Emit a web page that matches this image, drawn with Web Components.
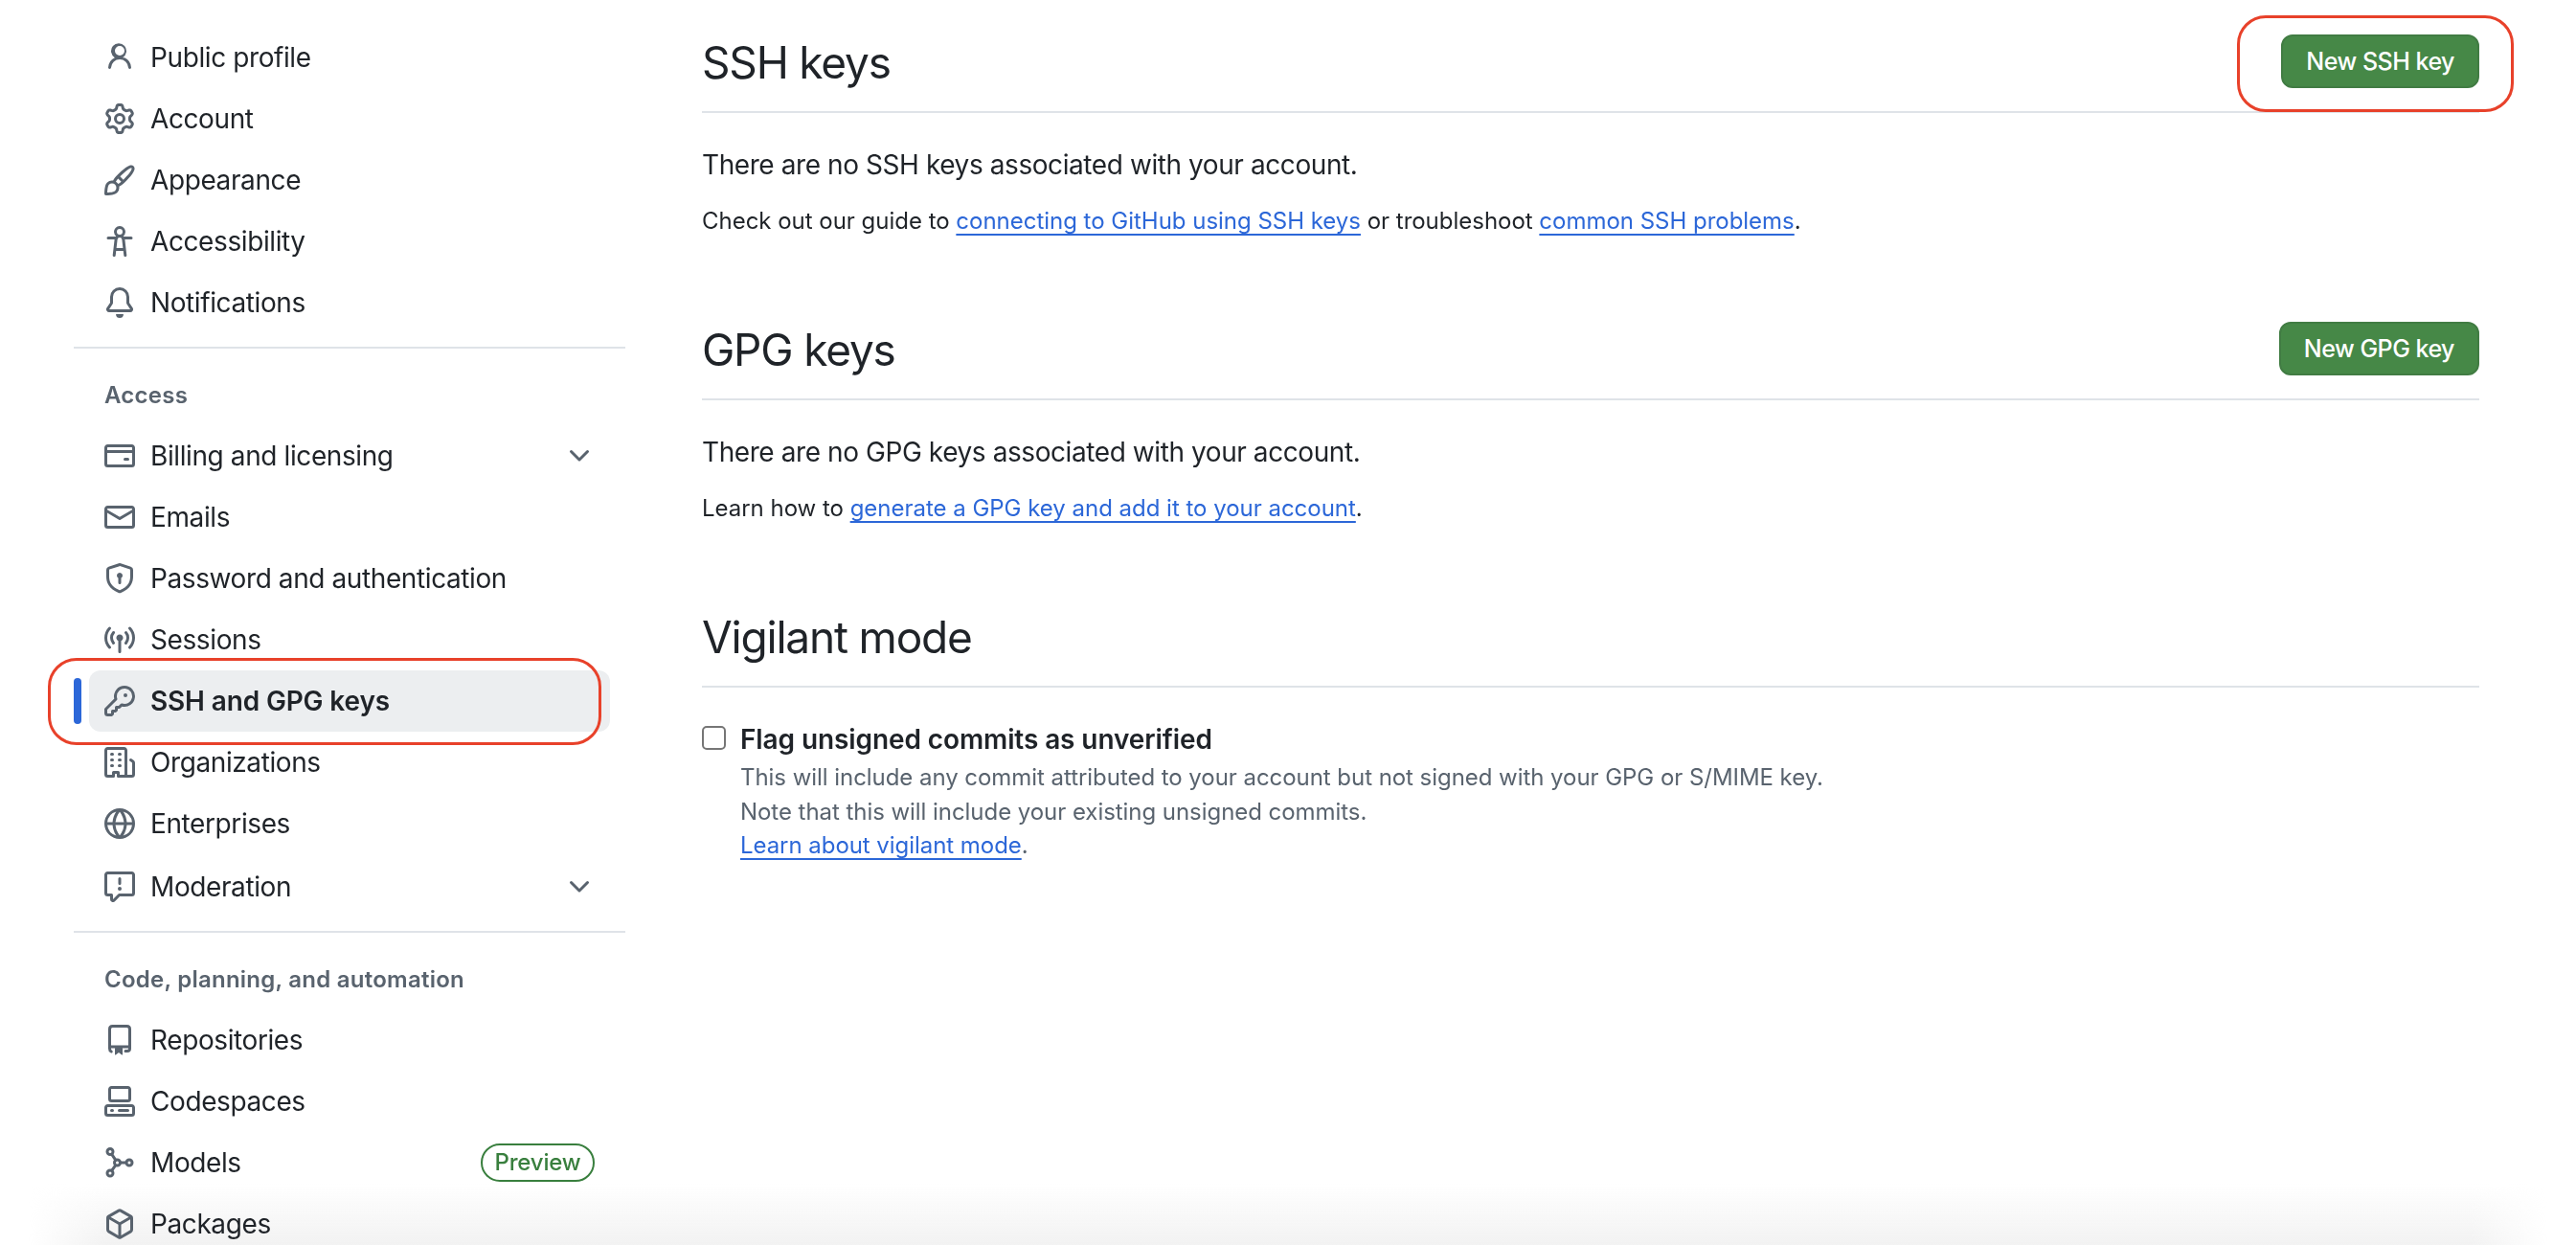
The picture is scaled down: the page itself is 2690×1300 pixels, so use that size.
<!DOCTYPE html>
<html lang="en">
<head>
<meta charset="utf-8">
<title>SSH and GPG keys</title>
<style>
  html { background: #fff; }
  html, body { margin: 0; height: 100%; overflow: hidden; }
  body { font-family: Inter, "Liberation Sans", sans-serif; color: #1f2328; }
</style>
</head>
<body>
<settings-page>
  <settings-sidebar slot="side">
    <nav-item icon="person">Public profile</nav-item>
    <nav-item icon="gear">Account</nav-item>
    <nav-item icon="paintbrush">Appearance</nav-item>
    <nav-item icon="accessibility">Accessibility</nav-item>
    <nav-item icon="bell">Notifications</nav-item>
    <nav-group label="Access">
      <nav-item icon="card" chevron>Billing and licensing</nav-item>
      <nav-item icon="mail">Emails</nav-item>
      <nav-item icon="shield">Password and authentication</nav-item>
      <nav-item icon="broadcast">Sessions</nav-item>
      <nav-item icon="key" active>SSH and GPG keys</nav-item>
      <nav-item icon="org">Organizations</nav-item>
      <nav-item icon="globe">Enterprises</nav-item>
      <nav-item icon="report" chevron style="margin-top:2px">Moderation</nav-item>
    </nav-group>
    <nav-group label="Code, planning, and automation">
      <nav-item icon="repo">Repositories</nav-item>
      <nav-item icon="codespaces">Codespaces</nav-item>
      <nav-item icon="models">Models<preview-pill slot="trailing">Preview</preview-pill></nav-item>
      <nav-item icon="package">Packages</nav-item>
    </nav-group>
  </settings-sidebar>

  <key-section heading="SSH keys">
    <green-button slot="action" ringed>New SSH key</green-button>
    <p class="lead">There are no SSH keys associated with your account.</p>
    <p>Check out our guide to <a href="#">connecting to GitHub using SSH keys</a> or troubleshoot <a href="#">common SSH problems</a>.</p>
  </key-section>
  <key-section heading="GPG keys">
    <green-button slot="action">New GPG key</green-button>
    <p class="lead">There are no GPG keys associated with your account.</p>
    <p>Learn how to <a href="#">generate a GPG key and add it to your account</a>.</p>
  </key-section>
  <key-section heading="Vigilant mode">
    <check-field label="Flag unsigned commits as unverified">
      This will include any commit attributed to your account but not signed with your GPG or S/MIME key.<br>
      Note that this will include your existing unsigned commits.<br>
      <a href="#">Learn about vigilant mode</a>.
    </check-field>
  </key-section>
</settings-page>
<bottom-shade></bottom-shade>

<script>
const ICONS = {
  person: '<path d="M10.561 8.073a6.005 6.005 0 0 1 3.432 5.142.75.75 0 1 1-1.498.07 4.5 4.5 0 0 0-8.99 0 .75.75 0 0 1-1.498-.07 6.004 6.004 0 0 1 3.431-5.142 3.999 3.999 0 1 1 4.123 0ZM10.5 4.5a2.5 2.5 0 1 0-5 0 2.5 2.5 0 0 0 5 0Z"/>',
  gear: '<path d="M8 0a8.2 8.2 0 0 1 .701.031C9.444.095 9.99.645 10.16 1.29l.288 1.107c.018.066.079.158.212.224.231.114.454.243.668.386.123.082.233.09.299.071l1.103-.303c.644-.176 1.392.021 1.82.63.27.385.506.792.704 1.218.315.675.111 1.422-.364 1.891l-.814.806c-.049.048-.098.147-.088.294.016.257.016.515 0 .772-.01.147.038.246.088.294l.814.806c.475.469.679 1.216.364 1.891a7.977 7.977 0 0 1-.704 1.217c-.428.61-1.176.807-1.82.63l-1.102-.302c-.067-.019-.177-.011-.3.071a5.909 5.909 0 0 1-.668.386c-.133.066-.194.158-.211.224l-.29 1.106c-.168.646-.715 1.196-1.458 1.26a8.006 8.006 0 0 1-1.402 0c-.743-.064-1.289-.614-1.458-1.26l-.289-1.106c-.018-.066-.079-.158-.212-.224a5.738 5.738 0 0 1-.668-.386c-.123-.082-.233-.09-.299-.071l-1.103.303c-.644.176-1.392-.021-1.82-.63a8.12 8.12 0 0 1-.704-1.218c-.315-.675-.111-1.422.363-1.891l.815-.806c.05-.048.098-.147.088-.294a6.214 6.214 0 0 1 0-.772c.01-.147-.038-.246-.088-.294l-.815-.806C.635 6.045.431 5.298.746 4.623a7.92 7.92 0 0 1 .704-1.217c.428-.61 1.176-.807 1.82-.63l1.102.302c.067.019.177.011.3-.071.214-.143.437-.272.668-.386.133-.066.194-.158.211-.224l.29-1.106C6.009.645 6.556.095 7.299.03 7.53.01 7.764 0 8 0Zm-.571 1.525c-.036.003-.108.036-.137.146l-.289 1.105c-.147.561-.549.967-.998 1.189-.173.086-.34.183-.5.29-.417.278-.97.423-1.529.27l-1.103-.303c-.109-.03-.175.016-.195.045-.22.312-.412.644-.573.99-.014.031-.021.11.059.19l.815.806c.411.406.562.957.53 1.456a4.709 4.709 0 0 0 0 .582c.032.499-.119 1.05-.53 1.456l-.815.806c-.081.08-.073.159-.059.19.162.346.353.677.573.989.02.03.085.076.195.046l1.102-.303c.56-.153 1.113-.008 1.53.27.161.107.328.204.501.29.447.222.85.629.997 1.189l.289 1.105c.029.109.101.143.137.146a6.6 6.6 0 0 0 1.142 0c.036-.003.108-.036.137-.146l.289-1.105c.147-.561.549-.967.998-1.189.173-.086.34-.183.5-.29.417-.278.97-.423 1.529-.27l1.103.303c.109.029.175-.016.195-.045.22-.313.411-.644.573-.99.014-.031.021-.11-.059-.19l-.815-.806c-.411-.406-.562-.957-.53-1.456a4.709 4.709 0 0 0 0-.582c-.032-.499.119-1.05.53-1.456l.815-.806c.081-.08.073-.159.059-.19a6.464 6.464 0 0 0-.573-.989c-.02-.03-.085-.076-.195-.046l-1.102.303c-.56.153-1.113.008-1.53-.27a4.44 4.44 0 0 0-.501-.29c-.447-.222-.85-.629-.997-1.189l-.289-1.105c-.029-.11-.101-.143-.137-.146a6.6 6.6 0 0 0-1.142 0ZM11 8a3 3 0 1 1-6 0 3 3 0 0 1 6 0ZM9.5 8a1.5 1.5 0 1 0-3.001.001A1.5 1.5 0 0 0 9.5 8Z"/>',
  paintbrush: '<path d="M11.134 1.535c.7-.509 1.416-.942 2.076-1.155.649-.21 1.463-.267 2.069.34.603.601.568 1.411.368 2.07-.202.668-.624 1.39-1.125 2.096-1.011 1.424-2.496 2.987-3.775 4.249-1.098 1.084-2.132 1.839-3.04 2.3a3.744 3.744 0 0 1-1.055 3.217c-.431.431-1.065.691-1.657.861-.614.177-1.294.287-1.914.357A21.151 21.151 0 0 1 .797 16H.743l.007-.75H.749L.742 16a.75.75 0 0 1-.743-.742l.743-.008-.742.007v-.054a21.25 21.25 0 0 1 .13-2.284c.067-.647.187-1.287.358-1.914.17-.591.43-1.226.86-1.657a3.746 3.746 0 0 1 3.227-1.054c.466-.893 1.225-1.907 2.314-2.982 1.271-1.255 2.833-2.75 4.245-3.777ZM1.62 13.089c-.051.464-.086.929-.104 1.395.466-.018.932-.053 1.396-.104a10.511 10.511 0 0 0 1.668-.309c.526-.151.856-.325 1.011-.48a2.25 2.25 0 1 0-3.182-3.182c-.155.155-.329.485-.48 1.01a10.515 10.515 0 0 0-.309 1.67Zm10.396-10.34c-1.224.89-2.605 2.189-3.822 3.384l1.718 1.718c1.21-1.205 2.51-2.597 3.387-3.833.47-.662.78-1.227.912-1.662.134-.444.032-.551.009-.575h-.001V1.78c-.014-.014-.113-.113-.548.027-.432.14-.995.462-1.655.942Zm-4.832 7.266-.001.001a9.859 9.859 0 0 0 1.63-1.142L7.155 7.216a9.7 9.7 0 0 0-1.161 1.607c.482.302.889.71 1.19 1.192Z"/>',
  accessibility: '<path d="M9.923 5.302c.063.063.122.129.178.198H14A.75.75 0 0 1 14 7h-3.3l.578 5.163.362 2.997a.75.75 0 0 1-1.49.18L9.868 13H6.132l-.282 2.34a.75.75 0 0 1-1.49-.18l.362-2.997L5.3 7H2a.75.75 0 0 1 0-1.5h3.9a2.54 2.54 0 0 1 .176-.198 3 3 0 1 1 3.847 0ZM9.2 7.073h-.001a1.206 1.206 0 0 0-2.398 0L6.305 11.5h3.39ZM9.5 3a1.5 1.5 0 1 0-3.001.001A1.5 1.5 0 0 0 9.5 3Z"/>',
  bell: '<path d="M8 16a2 2 0 0 0 1.985-1.75c.017-.137-.097-.25-.235-.25h-3.5c-.138 0-.252.113-.235.25A2 2 0 0 0 8 16ZM3 5a5 5 0 0 1 10 0v2.947c0 .05.015.098.042.139l1.703 2.555A1.519 1.519 0 0 1 13.482 13H2.518a1.516 1.516 0 0 1-1.263-2.36l1.703-2.554A.255.255 0 0 0 3 7.947Zm5-3.5A3.5 3.5 0 0 0 4.5 5v2.947c0 .346-.102.683-.294.97l-1.703 2.556a.017.017 0 0 0-.003.01l.001.006c0 .002.002.004.004.006l.006.004.007.001h10.964l.007-.001.006-.004.004-.006.001-.007a.017.017 0 0 0-.003-.01l-1.703-2.554a1.745 1.745 0 0 1-.294-.97V5A3.5 3.5 0 0 0 8 1.5Z"/>',
  card: '<path d="M10.75 9a.75.75 0 0 0 0 1.5h1.5a.75.75 0 0 0 0-1.5h-1.5Z"/><path d="M0 3.75C0 2.784.784 2 1.75 2h12.5c.966 0 1.75.784 1.75 1.75v8.5A1.75 1.75 0 0 1 14.25 14H1.75A1.75 1.75 0 0 1 0 12.25ZM14.5 6.5h-13v5.75c0 .138.112.25.25.25h12.5a.25.25 0 0 0 .25-.25Zm0-2.75a.25.25 0 0 0-.25-.25H1.75a.25.25 0 0 0-.25.25V5h13Z"/>',
  mail: '<path d="M1.75 2h12.5c.966 0 1.75.784 1.75 1.75v8.5A1.75 1.75 0 0 1 14.25 14H1.75A1.75 1.75 0 0 1 0 12.25v-8.5C0 2.784.784 2 1.75 2ZM1.5 12.251c0 .138.112.25.25.25h12.5a.25.25 0 0 0 .25-.25V5.809L8.38 9.397a.75.75 0 0 1-.76 0L1.5 5.809v6.442Zm13-8.181v-.32a.25.25 0 0 0-.25-.25H1.75a.25.25 0 0 0-.25.25v.32L8 7.88Z"/>',
  shield: '<path d="m8.533.133 5.25 1.68A1.75 1.75 0 0 1 15 3.48V7c0 1.566-.32 3.182-1.303 4.682-.983 1.498-2.585 2.813-5.032 3.855a1.697 1.697 0 0 1-1.33 0c-2.447-1.042-4.049-2.357-5.032-3.855C1.32 10.182 1 8.566 1 7V3.48a1.75 1.75 0 0 1 1.217-1.667l5.25-1.68a1.748 1.748 0 0 1 1.066 0Zm-.61 1.429.001.001-5.25 1.68a.251.251 0 0 0-.174.237V7c0 1.36.275 2.666 1.057 3.859.784 1.194 2.121 2.342 4.366 3.298a.196.196 0 0 0 .154 0c2.245-.957 3.582-2.103 4.366-3.297C13.225 9.666 13.5 8.358 13.5 7V3.48a.25.25 0 0 0-.174-.238l-5.25-1.68a.25.25 0 0 0-.153 0ZM9.5 6.5c0 .536-.286 1.032-.75 1.3v2.45a.75.75 0 0 1-1.5 0V7.8A1.5 1.5 0 1 1 9.5 6.5Z"/>',
  broadcast: '<path d="M8.75 8.582v5.668a.75.75 0 0 1-1.5 0V8.582a1.75 1.75 0 1 1 1.5 0Zm3.983-7.125a.75.75 0 0 1 1.06.026A7.976 7.976 0 0 1 16 7c0 2.139-.84 4.083-2.207 5.517a.75.75 0 1 1-1.086-1.034A6.474 6.474 0 0 0 14.5 7a6.474 6.474 0 0 0-1.793-4.483.75.75 0 0 1 .026-1.06Zm-9.466 0c.3.286.312.76.026 1.06A6.474 6.474 0 0 0 1.5 7a6.47 6.47 0 0 0 1.793 4.483.75.75 0 0 1-1.086 1.034A7.973 7.973 0 0 1 0 7c0-2.139.84-4.083 2.207-5.517a.75.75 0 0 1 1.06-.026Zm8.556 2.321A4.983 4.983 0 0 1 13 7a4.983 4.983 0 0 1-1.177 3.222.75.75 0 1 1-1.146-.967A3.483 3.483 0 0 0 11.5 7c0-.86-.31-1.646-.823-2.255a.75.75 0 0 1 1.146-.967Zm-6.492.958A3.483 3.483 0 0 0 4.5 7a3.483 3.483 0 0 0 .823 2.255.75.75 0 0 1-1.146.967A4.981 4.981 0 0 1 3 7a4.983 4.983 0 0 1 1.188-3.236.75.75 0 1 1 1.143.972Z"/>',
  key: '<path d="M10.5 0a5.499 5.499 0 1 1-1.288 10.848l-.932.932a.749.749 0 0 1-.53.22H7v.75a.749.749 0 0 1-.22.53l-.5.5a.749.749 0 0 1-.53.22H5v.75a.749.749 0 0 1-.22.53l-.5.5a.749.749 0 0 1-.53.22h-2A1.75 1.75 0 0 1 0 14.25v-2c0-.199.079-.389.22-.53l4.932-4.932A5.5 5.5 0 0 1 10.5 0Zm-4 5.5c-.001.431.069.86.205 1.269a.75.75 0 0 1-.181.768L1.5 12.56v1.69c0 .138.112.25.25.25h1.69l.06-.06v-1.19a.75.75 0 0 1 .75-.75h1.19l.06-.06v-1.19a.75.75 0 0 1 .75-.75h1.19l1.023-1.025a.75.75 0 0 1 .768-.18A4 4 0 1 0 6.5 5.5ZM11 6a1 1 0 1 1 0-2 1 1 0 0 1 0 2Z"/>',
  org: '<path d="M1.75 16A1.75 1.75 0 0 1 0 14.25V1.75C0 .784.784 0 1.75 0h8.5C11.216 0 12 .784 12 1.75v12.5c0 .085-.006.168-.018.25h2.268a.25.25 0 0 0 .25-.25V8.285a.25.25 0 0 0-.111-.208l-1.055-.703a.749.749 0 1 1 .832-1.248l1.055.703c.487.325.779.871.779 1.456v5.965A1.75 1.75 0 0 1 14.25 16h-3.5a.766.766 0 0 1-.197-.026c-.099.017-.2.026-.303.026h-3a.75.75 0 0 1-.75-.75V14h-1v1.25a.75.75 0 0 1-.75.75Zm-.25-1.75c0 .138.112.25.25.25H4v-1.25a.75.75 0 0 1 .75-.75h2.5a.75.75 0 0 1 .75.75v1.25h2.25a.25.25 0 0 0 .25-.25V1.75a.25.25 0 0 0-.25-.25h-8.5a.25.25 0 0 0-.25.25ZM3.75 6h.5a.75.75 0 0 1 0 1.5h-.5a.75.75 0 0 1 0-1.5ZM3 3.75A.75.75 0 0 1 3.75 3h.5a.75.75 0 0 1 0 1.5h-.5A.75.75 0 0 1 3 3.75Zm4 3A.75.75 0 0 1 7.75 6h.5a.75.75 0 0 1 0 1.5h-.5A.75.75 0 0 1 7 6.75ZM7.75 3h.5a.75.75 0 0 1 0 1.5h-.5a.75.75 0 0 1 0-1.5ZM3 9.75A.75.75 0 0 1 3.75 9h.5a.75.75 0 0 1 0 1.5h-.5A.75.75 0 0 1 3 9.75ZM7.75 9h.5a.75.75 0 0 1 0 1.5h-.5a.75.75 0 0 1 0-1.5Z"/>',
  globe: '<path d="M8 0a8 8 0 1 1 0 16A8 8 0 0 1 8 0ZM5.78 8.75a9.64 9.64 0 0 0 1.363 4.177c.255.426.542.832.857 1.215.245-.296.551-.705.857-1.215A9.64 9.64 0 0 0 10.22 8.75Zm4.44-1.5a9.64 9.64 0 0 0-1.363-4.177c-.307-.51-.612-.919-.857-1.215a9.927 9.927 0 0 0-.857 1.215A9.64 9.64 0 0 0 5.78 7.25Zm-5.944 1.5H1.543a6.507 6.507 0 0 0 4.666 5.5c-.123-.181-.24-.365-.352-.552-.715-1.192-1.437-2.874-1.581-4.948Zm-2.733-1.5h2.733c.144-2.074.866-3.756 1.58-4.948.12-.197.237-.381.353-.552a6.507 6.507 0 0 0-4.666 5.5Zm10.181 1.5c-.144 2.074-.866 3.756-1.58 4.948-.12.197-.237.381-.353.552a6.507 6.507 0 0 0 4.666-5.5Zm2.733-1.5a6.507 6.507 0 0 0-4.666-5.5c.123.181.24.365.353.552.714 1.192 1.436 2.874 1.58 4.948Z"/>',
  report: '<path d="M0 1.75C0 .784.784 0 1.75 0h12.5C15.216 0 16 .784 16 1.75v9.5A1.75 1.75 0 0 1 14.25 13H8.06l-2.573 2.573A1.458 1.458 0 0 1 3 14.543V13H1.75A1.75 1.75 0 0 1 0 11.25Zm1.75-.25a.25.25 0 0 0-.25.25v9.5c0 .138.112.25.25.25h2a.75.75 0 0 1 .75.75v2.19l2.72-2.72a.749.749 0 0 1 .53-.22h6.5a.25.25 0 0 0 .25-.25v-9.5a.25.25 0 0 0-.25-.25Zm7 2.25v2.5a.75.75 0 0 1-1.5 0v-2.5a.75.75 0 0 1 1.5 0ZM9 9a1 1 0 1 1-2 0 1 1 0 0 1 2 0Z"/>',
  repo: '<g fill="none" stroke="currentColor" stroke-width="1.5" stroke-linecap="round" stroke-linejoin="round"><path d="M3.6 14Q2.75 13.6 2.75 12.5V2.25Q2.75.75 4.25.75h7.5q1.5 0 1.5 1.5V12.5q0 1.25-1.25 1.25H11"/><path d="M3.4 11.5h9.85"/></g><path d="M5.5 12.25a.25.25 0 0 1 .25-.25h3.5a.25.25 0 0 1 .25.25v3.25a.25.25 0 0 1-.4.2l-1.45-1.087a.249.249 0 0 0-.3 0L5.9 15.7a.25.25 0 0 1-.4-.2Z"/>',
  codespaces: '<path d="M0 11.25c0-.966.784-1.75 1.75-1.75h12.5c.966 0 1.75.784 1.75 1.75v3A1.75 1.75 0 0 1 14.25 16H1.75A1.75 1.75 0 0 1 0 14.25Zm2-9.5C2 .784 2.784 0 3.75 0h8.5C13.216 0 14 .784 14 1.75v5a1.75 1.75 0 0 1-1.75 1.75h-8.5A1.75 1.75 0 0 1 2 6.75Zm1.75-.25a.25.25 0 0 0-.25.25v5c0 .138.112.25.25.25h8.5a.25.25 0 0 0 .25-.25v-5a.25.25 0 0 0-.25-.25Zm-2 9.5a.25.25 0 0 0-.25.25v3c0 .138.112.25.25.25h12.5a.25.25 0 0 0 .25-.25v-3a.25.25 0 0 0-.25-.25Z"/><path d="M7 12.75a.75.75 0 0 1 .75-.75h4.5a.75.75 0 0 1 0 1.5h-4.5a.75.75 0 0 1-.75-.75Zm-4 0a.75.75 0 0 1 .75-.75h.5a.75.75 0 0 1 0 1.5h-.5a.75.75 0 0 1-.75-.75Z"/>',
  models: '<g fill="none" stroke="currentColor" stroke-width="1.5"><circle cx="3" cy="2.25" r="1.5"/><circle cx="3" cy="13.5" r="1.5"/><circle cx="13" cy="8" r="1.5"/><circle cx="6.75" cy="8" r="1.5"/><path d="M3.8 3.6 5.9 6.7M3.8 12.2 5.9 9.3M8.25 8h3.25"/></g>',
  package: '<path d="m8.878.392 5.25 3.045c.54.314.872.89.872 1.514v6.098a1.75 1.75 0 0 1-.872 1.514l-5.25 3.045a1.75 1.75 0 0 1-1.756 0l-5.25-3.045A1.75 1.75 0 0 1 1 11.049V4.951c0-.624.332-1.201.872-1.514L7.122.392a1.75 1.75 0 0 1 1.756 0ZM7.875 1.69l-4.63 2.685L8 7.133l4.755-2.758-4.63-2.685a.248.248 0 0 0-.25 0ZM2.5 5.677v5.372c0 .09.047.171.125.216l4.625 2.683V8.432Zm6.25 8.271 4.625-2.683a.25.25 0 0 0 .125-.216V5.677L8.75 8.432Z"/>',
  chevron: '<path d="M12.78 5.22a.749.749 0 0 1 0 1.06l-4.25 4.25a.749.749 0 0 1-1.06 0L3.22 6.28a.749.749 0 1 1 1.06-1.06L8 8.939l3.72-3.719a.749.749 0 0 1 1.06 0Z"/>'
};

const svg = (name, size) =>
  `<svg width="${size}" height="${size}" viewBox="0 0 16 16" fill="currentColor" aria-hidden="true">${ICONS[name]}</svg>`;

class SettingsPage extends HTMLElement {
  connectedCallback() {
    this.attachShadow({ mode: 'open' }).innerHTML = `
      <style>
        :host { display: flex; align-items: flex-start; }
        .side { width: 576px; margin-left: 77px; flex-shrink: 0; }
        main { width: 1856px; margin-left: 80px; display: flex; flex-direction: column; }
      </style>
      <div class="side"><slot name="side"></slot></div>
      <main><slot></slot></main>`;
  }
}

class SettingsSidebar extends HTMLElement {
  connectedCallback() {
    this.attachShadow({ mode: 'open' }).innerHTML = `
      <style>
        :host { display: flex; flex-direction: column; padding-top: 28px; }
      </style>
      <slot></slot>`;
  }
}

class NavGroup extends HTMLElement {
  connectedCallback() {
    this.attachShadow({ mode: 'open' }).innerHTML = `
      <style>
        :host { display: flex; flex-direction: column; margin-top: 14px; border-top: 2px solid #dfe3e8; }
        .label {
          margin: 33px 0 15px 32px;
          font: 600 24px/32px Inter, "Liberation Sans", sans-serif;
          letter-spacing: 0.25px; color: #59636e;
        }
      </style>
      <div class="label">${this.getAttribute('label')}</div>
      <slot></slot>`;
  }
}

class NavItem extends HTMLElement {
  connectedCallback() {
    const active = this.hasAttribute('active');
    this.attachShadow({ mode: 'open' }).innerHTML = `
      <style>
        :host {
          display: flex; align-items: center; position: relative;
          height: 64px; margin-left: 16px; padding: 0 16px; width: 512px;
          font: ${active ? 600 : 400} 28px/40px Inter, "Liberation Sans", sans-serif;
          letter-spacing: ${active ? '-0.15px' : '-0.4px'};
          color: #1f2328; border-radius: 12px;
        }
        :host([active]) { background: #eceef0; }
        svg.icon { color: #59636e; flex-shrink: 0; margin-right: 16px; }
        .text { flex: 1; white-space: nowrap; }
        .chev { color: #59636e; }
        .bar {
          position: absolute; left: -16px; top: 8px; width: 8px; height: 48px;
          border-radius: 6px; background: #2c67d8;
        }
        .ring {
          position: absolute; left: -43px; top: -13px; width: 578px; height: 91px;
          box-sizing: border-box; border: 3px solid #e8412a; border-radius: 30px;
        }
      </style>
      ${svg(this.getAttribute('icon'), 32)}
      <span class="text"><slot></slot></span>
      <slot name="trailing"></slot>
      ${this.hasAttribute('chevron') ? svg('chevron', 32).replace('<svg', '<svg class="chev"') : ''}
      ${active ? '<div class="bar"></div><div class="ring"></div>' : ''}`;
    this.shadowRoot.querySelector('svg').classList.add('icon');
  }
}

class PreviewPill extends HTMLElement {
  connectedCallback() {
    this.attachShadow({ mode: 'open' }).innerHTML = `
      <style>
        :host {
          display: inline-flex; align-items: center; justify-content: center;
          box-sizing: border-box; width: 119px; height: 40px;
          border: 2px solid #397f3e; border-radius: 20px;
          font: 500 24px/32px Inter, "Liberation Sans", sans-serif;
          letter-spacing: -0.2px; color: #397f3e;
        }
      </style>
      <slot></slot>`;
  }
}

class KeySection extends HTMLElement {
  connectedCallback() {
    this.attachShadow({ mode: 'open' }).innerHTML = `
      <style>
        :host { display: block; height: 300px; padding-top: 29px; box-sizing: border-box; }
        header {
          display: flex; align-items: center; justify-content: space-between;
          height: 72px; padding-bottom: 15px; border-bottom: 2px solid #dfe3e8;
        }
        h2 { margin: 0; font: 400 46px/72px Inter, "Liberation Sans", sans-serif; letter-spacing: -1.2px; color: #1f2328; }
        .body { padding-top: 34px; }
        ::slotted(p) {
          margin: 0 0 19px;
          font: 400 24px/40px Inter, "Liberation Sans", sans-serif;
          letter-spacing: -0.02px; color: #1f2328;
        }
        ::slotted(p.lead) { font-size: 28px; letter-spacing: -0.42px; }
      </style>
      <header><h2>${this.getAttribute('heading')}</h2><slot name="action"></slot></header>
      <div class="body"><slot></slot></div>`;
  }
}

class GreenButton extends HTMLElement {
  connectedCallback() {
    this.attachShadow({ mode: 'open' }).innerHTML = `
      <style>
        :host { display: block; position: relative; top: -1px; }
        button {
          display: block; height: 56px; padding: 0 24px; box-sizing: border-box;
          background: #468847; border: 2px solid #417c43; border-radius: 12px;
          color: #fff; font: 500 25px/32px Inter, "Liberation Sans", sans-serif;
          letter-spacing: -0.5px; white-space: nowrap;
        }
        .ring {
          position: absolute; left: -46px; right: -36px; top: -20px; bottom: -25px;
          border: 3px solid #e8412a; border-radius: 30px;
        }
      </style>
      <button type="button"><slot></slot></button>
      ${this.hasAttribute('ringed') ? '<div class="ring"></div>' : ''}`;
  }
}

class CheckField extends HTMLElement {
  connectedCallback() {
    this.attachShadow({ mode: 'open' }).innerHTML = `
      <style>
        :host { display: grid; grid-template-columns: 40px 1fr; }
        .box {
          width: 25px; height: 25px; margin-top: 6px; box-sizing: border-box;
          border: 2px solid #767676; border-radius: 5px; background: #fff;
        }
        label { font: 600 28px/40px Inter, "Liberation Sans", sans-serif; letter-spacing: -0.1px; color: #1f2328; }
        .note {
          grid-column: 2; margin-top: 2px;
          font: 400 24px/35.5px Inter, "Liberation Sans", sans-serif;
          letter-spacing: -0.05px; color: #59636e;
        }
      </style>
      <div class="box"></div>
      <label>${this.getAttribute('label')}</label>
      <div class="note"><slot></slot></div>`;
  }
}

class BottomShade extends HTMLElement {
  connectedCallback() {
    this.attachShadow({ mode: 'open' }).innerHTML = `
      <style>
        :host {
          position: fixed; left: 0; right: 0; bottom: 0; height: 64px; z-index: -1;
          background: linear-gradient(to bottom, rgba(240,240,240,0), rgba(240,240,240,.85));
          -webkit-mask-image: linear-gradient(to right, transparent 30px, #000 110px, #000 calc(100% - 110px), transparent calc(100% - 30px));
        }
      </style>`;
  }
}

// link look has to live in light DOM, anchors are slotted from the page
const linkStyle = document.createElement('style');
linkStyle.textContent = 'a { color: #2c67d8; text-decoration: underline; text-decoration-thickness: 2px; text-underline-offset: 5px; }';
document.head.appendChild(linkStyle);

customElements.define('settings-page', SettingsPage);
customElements.define('settings-sidebar', SettingsSidebar);
customElements.define('nav-group', NavGroup);
customElements.define('nav-item', NavItem);
customElements.define('preview-pill', PreviewPill);
customElements.define('key-section', KeySection);
customElements.define('green-button', GreenButton);
customElements.define('check-field', CheckField);
customElements.define('bottom-shade', BottomShade);
</script>
</body>
</html>
